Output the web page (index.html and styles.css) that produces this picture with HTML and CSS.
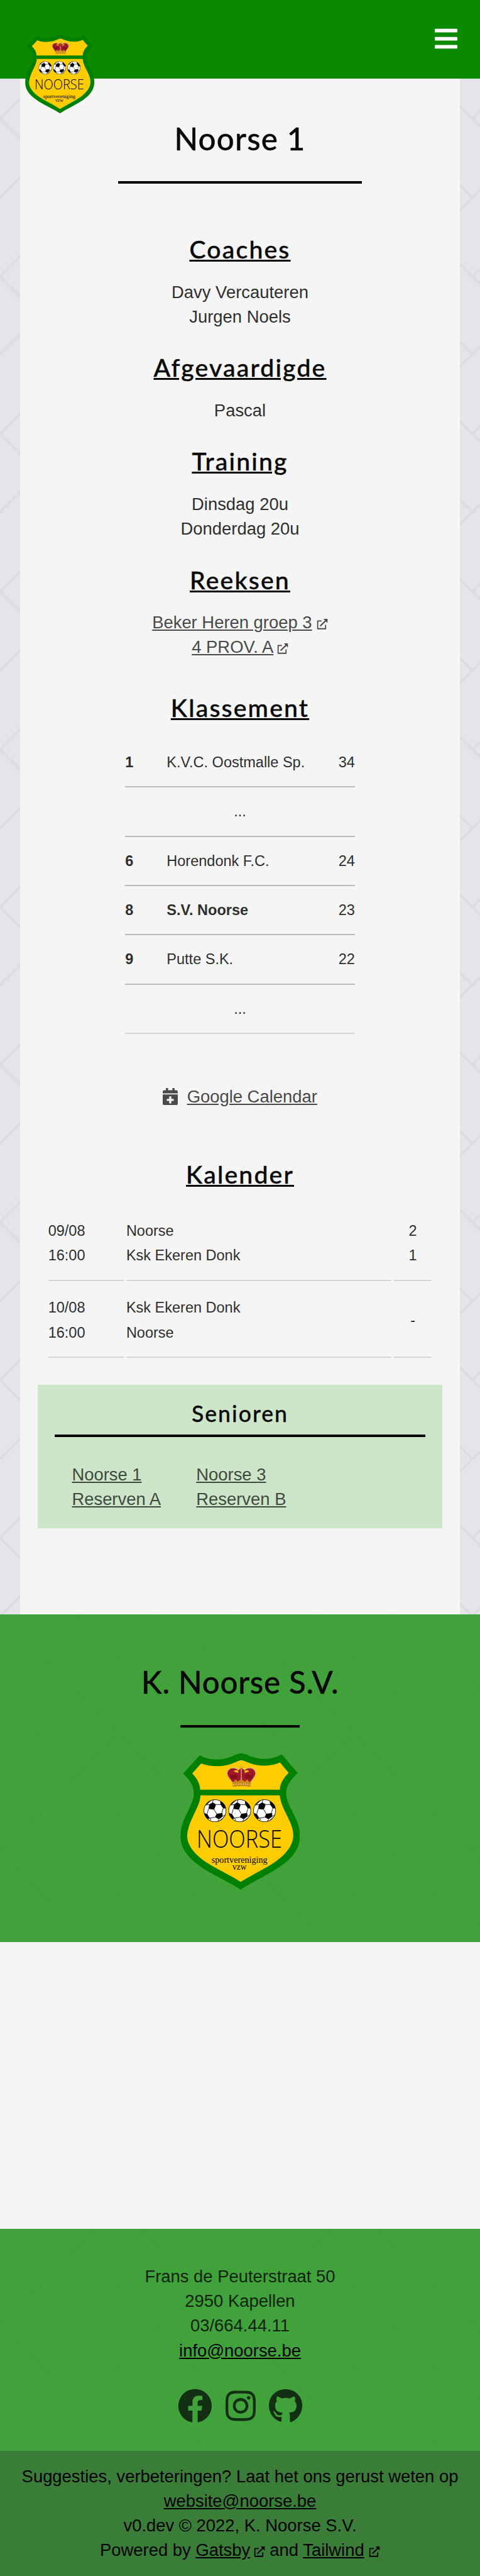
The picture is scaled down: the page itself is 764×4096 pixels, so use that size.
FILE: index.html
```html
<!DOCTYPE html>
<html lang="nl">
<head>
<meta charset="utf-8">
<title>Noorse 1</title>
<link rel="stylesheet" href="styles.css">
</head>
<body>
<svg class="defs" aria-hidden="true">
  <symbol id="ball" viewBox="-84 -84 168 168">
    <circle r="81" fill="#fff" stroke="#000" stroke-width="4"/>
    <path d="M-42-45-17-61 8-45-6-8-47-13ZM12 22 55 17 57 42 30 63 0 48ZM38-71Q76-50 80-17L60-17 40-45ZM-79 17-56 25-38 54-52 63Q-73 45-79 17ZM-72-35Q-62-54-46-66L-22-76-42-62-58-46ZM70 40Q52 70 22 80L38 68 58 52Z"/>
    <path d="M8-45 40-45M-18-61-12-80M-42-45-62-42M-47-13-57 22M-6-8 12 22M60-17 50 17M0 48-38 54M30 63 20 78M57 42 76 30M-38 54-30 66-36 72" fill="none" stroke="#000" stroke-width="4"/>
  </symbol>
  <symbol id="crest" viewBox="117 94 876 996">
    <path fill="#008000" d="M259 108C330 148 420 145 480 121C520 106 540 94 563 94C590 94 610 108 645 120C720 145 790 138 859 101L975 238C915 295 891 335 890 385C890 430 915 480 942 530C975 595 992 645 992 695C992 790 935 860 860 912C770 975 650 1030 557 1089C470 1030 350 985 255 915C165 850 118 780 118 703C118 635 140 580 168 525C195 470 216 430 215 380C213 330 190 290 137 241Z"/>
    <path fill="#fc0" d="M269 168C330 192 415 193 478 174C515 162 535 149 563 143C590 150 615 162 650 173C715 192 785 186 846 161L909 236C865 280 848 315 844 359H262C260 318 240 275 203 241ZM264 401H844C848 450 875 505 905 565C930 615 943 655 943 692C943 765 890 830 820 880C740 935 645 980 558 1033C470 975 370 935 285 875C210 820 167 760 167 700C167 655 185 605 210 552C240 490 262 450 264 401Z"/>
    <path fill="#e8b93a" d="M556 178h14v14h14v10h-14v14h-14v-14h-14v-10h14Z"/>
    <path fill="#a3172a" d="M498 308C480 280 458 262 460 236C465 200 515 190 540 218L563 200 586 218C612 190 662 200 667 236C668 262 646 280 628 308Z"/>
    <path fill="#fc0" d="M540 222C525 214 515 216 508 226L540 236ZM587 222C602 214 612 216 619 226L587 236Z"/>
    <path fill="#6d0d1a" d="M475 245q15 15 32 5t30 10l-10 22-20-6-15 10zM652 245q-15 15-32 5t-30 10l10 22 20-6 15 10z" opacity=".6"/>
    <path fill="none" stroke="#dcb98f" stroke-width="8" stroke-dasharray="7 3" d="M494 304C478 278 457 262 459 236C464 196 515 188 542 214M633 304C648 278 670 262 668 236C663 196 612 188 585 214M563 205V290"/>
    <path fill="#c98a1b" d="M497 298 508 302 522 284 536 300 563 282 590 300 606 284 620 302 634 298 628 339Q563 328 502 339Z"/>
    <path fill="none" stroke="#fbe9b0" stroke-width="7" stroke-dasharray="7 10" d="M505 323Q563 312 626 323"/>
    <use href="#ball" x="286" y="429" width="168" height="168"/>
    <use href="#ball" x="467" y="429" width="168" height="168"/>
    <use href="#ball" x="649" y="429" width="168" height="168"/>
    <text class="crest-name" x="236" y="782" textLength="626" lengthAdjust="spacingAndGlyphs">NOORSE</text>
    <text class="crest-sub" x="345" y="895" textLength="409" lengthAdjust="spacingAndGlyphs">sportvereniging</text>
    <text class="crest-sub" x="498" y="944" textLength="103" lengthAdjust="spacingAndGlyphs">vzw</text>
  </symbol>
  <symbol id="ext" viewBox="0 0 27 27">
    <path fill="none" stroke="currentColor" stroke-width="2.8" stroke-linejoin="round" d="M12 5.300H2.300V24.700H22V15"/>
    <path fill="none" stroke="currentColor" stroke-width="3.400" d="M8.500 18 23 4"/>
    <path fill="currentColor" d="M16.500 0H27V10.500Z"/>
  </symbol>
</svg>

<header class="topbar">
  <svg class="crest crest-top"><use href="#crest"/></svg>
  <svg class="menu" viewBox="0 0 448 512"><path fill="#fff" d="M16 132h416c9 0 16-7 16-16V76c0-9-7-16-16-16H16C7 60 0 67 0 76v40c0 9 7 16 16 16zm0 160h416c9 0 16-7 16-16v-40c0-9-7-16-16-16H16c-9 0-16 7-16 16v40c0 9 7 16 16 16zm0 160h416c9 0 16-7 16-16v-40c0-9-7-16-16-16H16c-9 0-16 7-16 16v40c0 9 7 16 16 16z"/></svg>
</header>

<main class="content">
  <h1 class="title">Noorse 1</h1>
  <hr class="rule">

  <h2 class="heading first">Coaches</h2>
  <p>Davy Vercauteren<br>Jurgen Noels</p>
  <h2 class="heading">Afgevaardigde</h2>
  <p>Pascal</p>
  <h2 class="heading">Training</h2>
  <p>Dinsdag 20u<br>Donderdag 20u</p>
  <h2 class="heading">Reeksen</h2>
  <p class="links"><a href="#">Beker Heren groep 3</a> <svg class="ext wide"><use href="#ext"/></svg><br><a href="#">4 PROV. A</a><svg class="ext"><use href="#ext"/></svg></p>

  <h2 class="heading ranking-heading">Klassement</h2>
  <div class="ranking">
    <div class="rank"><b>1</b><span>K.V.C. Oostmalle Sp.</span><span>34</span></div>
    <div class="rank dots">...</div>
    <div class="rank"><b>6</b><span>Horendonk F.C.</span><span>24</span></div>
    <div class="rank"><b>8</b><b>S.V. Noorse</b><span>23</span></div>
    <div class="rank"><b>9</b><span>Putte S.K.</span><span>22</span></div>
    <div class="rank dots">...</div>
  </div>

  <p class="calendar-link links"><svg class="cal" viewBox="0 0 448 512"><path fill="currentColor" d="M436 160H12c-6.600 0-12-5.400-12-12v-36c0-26.500 21.500-48 48-48h48V12c0-6.600 5.400-12 12-12h40c6.600 0 12 5.400 12 12v52h128V12c0-6.600 5.400-12 12-12h40c6.600 0 12 5.400 12 12v52h48c26.500 0 48 21.500 48 48v36c0 6.600-5.400 12-12 12zM12 192h424c6.600 0 12 5.400 12 12v260c0 26.500-21.500 48-48 48H48c-26.500 0-48-21.500-48-48V204c0-6.600 5.400-12 12-12zm316 140c0-6.600-5.400-12-12-12h-60v-60c0-6.600-5.400-12-12-12h-40c-6.600 0-12 5.400-12 12v60h-60c-6.600 0-12 5.400-12 12v40c0 6.600 5.400 12 12 12h60v60c0 6.600 5.400 12 12 12h40c6.600 0 12-5.400 12-12v-60h60c6.600 0 12-5.400 12-12v-40z"/></svg><a href="#">Google Calendar</a></p>

  <h2 class="heading calendar-heading">Kalender</h2>
  <div class="matches">
    <div class="match"><div>09/08<br>16:00</div><div>Noorse<br>Ksk Ekeren Donk</div><div class="score">2<br>1</div></div>
    <div class="match"><div>10/08<br>16:00</div><div>Ksk Ekeren Donk<br>Noorse</div><div class="score">-</div></div>
  </div>

  <nav class="teams">
    <h3 class="teams-title">Senioren</h3>
    <ul class="team-list links">
      <li><a href="#">Noorse 1</a></li><li><a href="#">Noorse 3</a></li>
      <li><a href="#">Reserven A</a></li><li><a href="#">Reserven B</a></li>
    </ul>
  </nav>
</main>

<section class="club">
  <h2 class="title club-title">K. Noorse S.V.</h2>
  <hr class="rule short">
  <svg class="crest crest-large"><use href="#crest"/></svg>
</section>

<div class="sponsors"></div>

<footer class="footer">
  <div class="contact">
    <p>Frans de Peuterstraat 50<br>2950 Kapellen<br>03/664.44.11<br><a href="#">info@noorse.be</a></p>
    <div class="social">
      <svg class="fb" viewBox="0 0 512 512"><path fill="currentColor" d="M504 256C504 119 393 8 256 8S8 119 8 256c0 123.800 90.700 226.400 209.300 245V327.700h-63V256h63v-54.600c0-62.200 37-96.500 93.700-96.500 27.100 0 55.500 4.800 55.500 4.800v61h-31.300c-30.800 0-40.400 19.100-40.400 38.700V256h68.800l-11 71.700h-57.800V501C413.300 482.400 504 379.800 504 256z"/></svg>
      <svg class="ig" viewBox="0 0 448 512"><path fill="currentColor" d="M224.100 141c-63.600 0-114.900 51.300-114.900 114.900s51.300 114.900 114.900 114.900S339 319.500 339 255.900 287.700 141 224.100 141zm0 189.600c-41.100 0-74.700-33.500-74.700-74.700s33.500-74.700 74.700-74.700 74.700 33.500 74.700 74.700-33.600 74.700-74.700 74.700zm146.400-194.300c0 14.900-12 26.800-26.800 26.800-14.900 0-26.800-12-26.800-26.800s12-26.800 26.800-26.800 26.800 12 26.800 26.800zm76.100 27.200c-1.700-35.900-9.900-67.700-36.200-93.900-26.200-26.200-58-34.400-93.900-36.200-37-2.100-147.900-2.100-184.900 0-35.800 1.700-67.600 9.900-93.900 36.100s-34.400 58-36.200 93.900c-2.100 37-2.100 147.900 0 184.900 1.700 35.900 9.900 67.700 36.200 93.900s58 34.400 93.900 36.200c37 2.100 147.900 2.100 184.900 0 35.900-1.700 67.700-9.900 93.900-36.200 26.200-26.200 34.400-58 36.200-93.900 2.100-37 2.100-147.800 0-184.800zM398.800 388c-7.800 19.600-22.900 34.700-42.600 42.600-29.500 11.700-99.500 9-132.100 9s-102.700 2.600-132.100-9c-19.600-7.800-34.700-22.900-42.600-42.600-11.700-29.500-9-99.500-9-132.100s-2.600-102.700 9-132.100c7.800-19.600 22.900-34.700 42.600-42.600 29.500-11.700 99.500-9 132.100-9s102.700-2.600 132.100 9c19.600 7.800 34.700 22.900 42.600 42.600 11.700 29.500 9 99.500 9 132.100s2.700 102.700-9 132.100z"/></svg>
      <svg class="gh" viewBox="0 0 496 512"><path fill="currentColor" fill-rule="evenodd" d="M248 8C106 8 0 113 0 252c0 111 70 206 170 239 12 2 18-3 18-12v-62c-22 8-62 6-80-6-20-14-22-42-42-62-6-6-2-15 8-12 28 8 36 50 62 58 22 6 42 2 53-2 2-16 9-27 16-34-56-6-112-14-112-111 0-28 8-42 24-60-3-7-11-33 3-68 21-7 69 27 69 27 40-11 84-11 124 0 0 0 48-34 69-27 14 35 6 61 3 68 16 18 26 32 26 60 0 97-59 105-115 111 9 8 17 23 17 47v80c0 9 6 14 17 12C428 458 496 363 496 252 496 113 389 8 248 8z"/></svg>
    </div>
  </div>
  <div class="legal">
    <p>Suggesties, verbeteringen? Laat het ons gerust weten op<br><a href="#">website@noorse.be</a><br>v0.dev © 2022, K. Noorse S.V.<br>Powered by <a href="#">Gatsby</a><svg class="ext"><use href="#ext"/></svg> and <a href="#">Tailwind</a> <svg class="ext wide"><use href="#ext"/></svg></p>
  </div>
</footer>
</body>
</html>
```
FILE: styles.css
```css
/* 1rem equals ten layout units; the page is 39rem wide */
html { font-size: 19.59px; }
* { box-sizing: border-box; margin: 0; padding: 0; }
body {
  font-family: "Liberation Sans", Arial, sans-serif;
  font-size: 1.4rem;
  line-height: 2rem;
  color: #2f2f2f;
  text-align: center;
  background-color: #e4e5e8;
  background-image: url("data:image/svg+xml,%3Csvg xmlns='http://www.w3.org/2000/svg' viewBox='0 0 64 128' width='64' height='128'%3E%3Cpath fill='none' stroke='%23cfd0d4' stroke-opacity='.38' stroke-width='2' d='M-1 33 33-1M31-1 65 33M65 31-1 97M31 63 65 97M-1 95 33 129'/%3E%3C/svg%3E");
  background-size: 6.4rem 12.8rem;
  overflow-x: hidden;
}
a { color: inherit; text-decoration: underline; }
ul { list-style: none; }
.defs { position: absolute; width: 0; height: 0; }

.topbar {
  position: relative;
  height: 6.4rem;
  padding: 2.1rem 1.83rem 0;
  display: flex;
  justify-content: flex-end;
  align-items: flex-start;
  background: #0b8a00;
}
.menu { width: 1.837rem; height: 2.1rem; }
.crest { display: block; }
.crest-top { position: absolute; left: 2.03rem; top: 2.81rem; width: 5.63rem; height: 6.4rem; }
.crest-large { width: 9.74rem; height: 11.06rem; margin: 2.1rem auto 0; }
.crest-name { font: 300 176px "Open Sans", sans-serif; fill: #000; }
.crest-sub { font: 64px "Liberation Serif", serif; fill: #000; }

.content {
  margin: 0 1.64rem;
  padding: 3.325rem 1.4rem 6.97rem;
  background: #f5f5f5;
}
.title {
  font-family: Lato, sans-serif;
  font-size: 2.52rem;
  line-height: 3rem;
  font-weight: 500;
  letter-spacing: .06rem;
  color: #090909;
  -webkit-text-stroke: .3px currentColor;
}
.club-title { letter-spacing: .035rem; }
.rule { width: 19.8rem; height: 4px; margin: 1.975rem auto 0; border: 0; background: #000; }
.rule.short { width: 9.67rem; margin-top: 2rem; }
.heading {
  margin: 1.91rem 0 1.3rem;
  font-family: Lato, sans-serif;
  font-size: 2rem;
  line-height: 2.4rem;
  font-weight: 500;
  letter-spacing: .11rem;
  text-decoration: underline;
  color: #090909;
  -webkit-text-stroke: .4px currentColor;
}
.heading.first { margin-top: 4.09rem; }
.links { color: #4a4a4a; }
.ext { width: .9rem; height: .88rem; margin-left: .3rem; vertical-align: -.1rem; }
.ext.wide { margin-left: 0; }

.ranking-heading { margin: 2.66rem 0 1.34rem; }
.ranking { width: 18.67rem; margin: 0 auto; font-size: 1.2rem; text-align: left; }
.rank {
  display: grid;
  grid-template-columns: 3.38rem 1fr auto;
  height: 4rem;
  padding-top: .98rem;
  border-bottom: 2px solid #bbb;
}
.rank.dots { display: block; text-align: center; }
.rank:last-child { border-color: #d6d6d6; }

.calendar-link { display: flex; justify-content: center; gap: .74rem; margin-top: 4.07rem; }
.cal { width: 1.225rem; height: 1.4rem; margin-top: .32rem; }
.calendar-heading { margin: 4.07rem 0 1.28rem; }

.matches { display: grid; width: 31.17rem; margin: 0 auto; font-size: 1.2rem; text-align: left; }
.match { display: grid; grid-template-columns: 6.14rem 1fr 3.08rem; column-gap: .2rem; }
.match > div { padding: 1.2rem 0 .94rem; border-bottom: 2px solid #d6d6d6; }
.match .score { display: grid; place-content: center; }

.teams { margin-top: 2.2rem; padding: 1.2rem 1.4rem 1.4rem; background: #cde6c9; }
.teams-title {
  padding-bottom: .6rem;
  border-bottom: 4px solid #000;
  font-family: Lato, sans-serif;
  font-size: 1.82rem;
  line-height: 2.2rem;
  font-weight: 500;
  letter-spacing: .1rem;
  color: #090909;
  -webkit-text-stroke: .3px currentColor;
}
.team-list {
  display: grid;
  grid-template-columns: 10.1rem 10.1rem;
  margin-top: 2.035rem;
  padding-left: 1.4rem;
  text-align: left;
  color: #414a40;
}

.club { height: 26.59rem; padding-top: 4rem; background: rgba(11, 138, 0, .75); }
.sponsors { height: 23.3rem; background: #f5f5f5; }

.footer { background: rgba(11, 138, 0, .75); color: #10240f; }
.contact { padding: 2.845rem 0 2.28rem; }
.footer a { color: #000; }
.social { display: flex; justify-content: center; gap: 1.1rem; margin-top: 2.085rem; color: #132f13; }
.social svg { height: 2.8rem; }
.fb { width: 2.8rem; }
.ig { width: 2.45rem; }
.gh { width: 2.71rem; }
.legal { padding: 1.055rem 0 1.085rem; background: rgba(51, 89, 54, .5); color: #000; }
```
